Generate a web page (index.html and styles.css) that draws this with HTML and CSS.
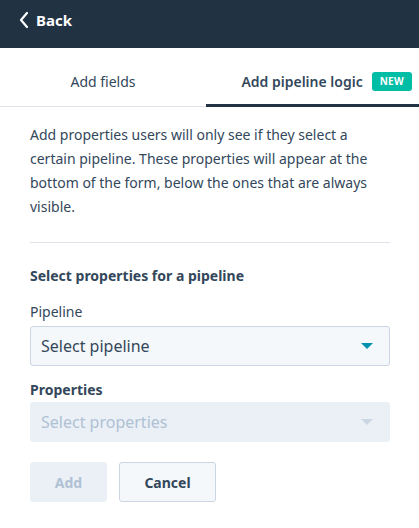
FILE: index.html
```html
<!DOCTYPE html>
<html lang="en">
<head>
  <meta charset="UTF-8" />
  <title>Add pipeline logic</title>
  <link rel="stylesheet" href="styles.css">
</head>
<body>
  <header class="topbar">
    <a class="back" href="#">
      <svg width="12" height="18" viewBox="0 0 12 18"><path d="M9 2 L3 9 L9 16" fill="none" stroke="#fff" stroke-width="2.2" stroke-linecap="round" stroke-linejoin="round"/></svg>
      <span>Back</span>
    </a>
  </header>

  <nav class="tabs">
    <div class="tab">Add fields</div>
    <div class="tab active">Add pipeline logic <span class="badge">NEW</span></div>
  </nav>

  <main class="panel">
    <p class="intro">Add properties users will only see if they select a certain pipeline. These properties will appear at the bottom of the form, below the ones that are always visible.</p>

    <hr class="divider">

    <h3>Select properties for a pipeline</h3>

    <label class="field-label">Pipeline</label>
    <div class="select">
      <span>Select pipeline</span>
      <span class="caret"></span>
    </div>

    <label class="field-label strong">Properties</label>
    <div class="select disabled">
      <span>Select properties</span>
      <span class="caret"></span>
    </div>

    <div class="actions">
      <button class="btn btn-disabled">Add</button>
      <button class="btn btn-secondary">Cancel</button>
    </div>
  </main>
</body>
</html>
```

FILE: styles.css
```css
body {
  margin: 0;
  font-family: "Noto Sans", sans-serif;
  color: #33475b;
  background: #fff;
}

.topbar {
  background: #213343;
  height: 48px;
  display: flex;
  align-items: flex-start;
  padding-left: 18px;
  box-sizing: border-box;
  padding-top: 10px;
}

.back {
  display: flex;
  align-items: center;
  gap: 6px;
  color: #fff;
  font-weight: 700;
  font-size: 15px;
  text-decoration: none;
}

.tabs {
  display: flex;
  height: 58px;
  border-bottom: 1px solid #dfe3eb;
}

.tab {
  flex: 1;
  display: flex;
  align-items: center;
  justify-content: center;
  font-size: 14px;
  color: #33475b;
  padding-top: 8px;
}

.tab.active {
  font-weight: 600;
  border-bottom: 3px solid #213343;
  margin-bottom: -1px;
  padding-top: 10px;
  justify-content: flex-end;
  padding-right: 7px;
}

.badge {
  background: #00bda5;
  color: #fff;
  font-size: 10px;
  font-weight: 700;
  line-height: 13px;
  border-radius: 3px;
  padding: 3px 8px;
  margin-left: 9px;
  letter-spacing: 0.3px;
}

.panel {
  padding: 0 29px 0 30px;
}

.intro {
  font-size: 14px;
  line-height: 24px;
  margin: 16px 0 0;
}

.divider {
  border: none;
  border-top: 1px solid #dfe3eb;
  margin: 23px 0 0;
}

h3 {
  font-size: 14px;
  font-weight: 700;
  margin: 24px 0 0;
  line-height: 18px;
}

.field-label {
  display: block;
  font-size: 14px;
  margin: 18px 0 5px;
  line-height: 18px;
}

.field-label.strong {
  font-weight: 700;
  margin-top: 15px;
  margin-bottom: 3px;
}

.select {
  height: 38px;
  border: 1px solid #cbd6e2;
  border-radius: 3px;
  background: #f5f8fa;
  display: flex;
  align-items: center;
  justify-content: space-between;
  padding: 0 16px 0 10px;
  font-size: 16px;
}

.caret {
  width: 0;
  height: 0;
  border-left: 6px solid transparent;
  border-right: 6px solid transparent;
  border-top: 6px solid #0091ae;
}

.select.disabled {
  background: #eaf0f6;
  border-color: #eaf0f6;
  color: #b0c1d4;
}

.select.disabled .caret {
  border-top-color: #cbd6e2;
}

.actions {
  display: flex;
  gap: 12px;
  margin-top: 20px;
}

.btn {
  font-family: inherit;
  font-size: 14px;
  font-weight: 700;
  height: 40px;
  border-radius: 3px;
  border: 1px solid #cbd6e2;
}

.btn-disabled {
  width: 77px;
  background: #eaf0f6;
  border-color: #eaf0f6;
  color: #b0c1d4;
}

.btn-secondary {
  width: 97px;
  background: #f5f8fa;
  color: #33475b;
}
```
